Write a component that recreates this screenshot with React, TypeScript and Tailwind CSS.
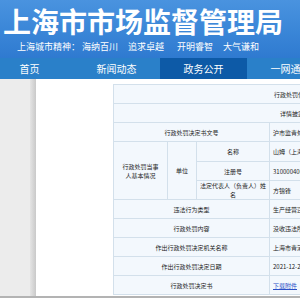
import React from 'react'

const nav = ['首页', '新闻动态', '政务公开', '一网通办']

const cell = "border border-[#d3e0eb] bg-[#f3f8fd] text-[6px] leading-[9px] text-[#222] text-center"
const val = "border border-[#d3e0eb] bg-[#f3f8fd] text-[6px] leading-[9px] text-[#222] text-left px-[3px] whitespace-nowrap"

const rows: [string, string][] = [
  ['违法行为类型', '生产经营违反食品安全标准的食品'],
  ['行政处罚内容', '没收违法所得，罚款'],
  ['作出行政处罚决定机关名称', '上海市青浦区市场监督管理局'],
  ['作出行政处罚决定日期', '2021-12-28'],
]

export default function App() {
  return (
    <div className="w-[300px] h-[300px] overflow-hidden bg-white" style={{ fontFamily: '"Noto Sans CJK SC", "Noto Sans", sans-serif' }}>
      <div className="h-[58px] bg-gradient-to-b from-[#4a93df] via-[#3b87d8] to-[#2f7ad0] pl-[3px] pt-[6px]">
        <div className="text-[28px] leading-[30px] font-bold text-white whitespace-nowrap">上海市市场监督管理局</div>
        <div className="mt-[6px] ml-[14px] text-[9px] leading-[10px] text-white whitespace-nowrap flex">
          <span>上海城市精神：</span>
          <span className="ml-[2px]">海纳百川</span>
          <span className="ml-[10px]">追求卓越</span>
          <span className="ml-[13px]">开明睿智</span>
          <span className="ml-[10px]">大气谦和</span>
        </div>
      </div>

      <div className="flex h-[21px] bg-[#2a80c9] -ml-[14px]">
        {nav.map((n, i) => (
          <div key={n} className={`w-[87px] shrink-0 text-center text-[10px] leading-[22px] text-white ${i === 2 ? 'bg-[#0d5aa7]' : ''}`}>{n}</div>
        ))}
      </div>

      <div className="flex h-[219px] border-b-2 border-[#b3b3b3]">
        <div className="w-[30px] bg-[#ececec]" />
        <div className="w-[6px] bg-gradient-to-r from-[#e4e4e4] to-[#c9c9c9]" />
        <div className="flex-1 bg-white pt-[5px] pl-[77px] overflow-hidden">
          <table className="table-fixed border-collapse w-[370px] border border-[#d3e0eb]">
            <colgroup>
              <col className="w-[54px]" />
              <col className="w-[29px]" />
              <col className="w-[73px]" />
              <col />
            </colgroup>
            <tbody>
              <tr className="h-[19px]"><td colSpan={4} className={cell}>行政处罚信息公示</td></tr>
              <tr className="h-[19px]"><td colSpan={4} className={cell}>详情披露信息</td></tr>
              <tr className="h-[19px]">
                <td colSpan={3} className={cell}>行政处罚决定书文号</td>
                <td className={val}>沪市监青处〔2021〕292021001234号</td>
              </tr>
              <tr className="h-[20px]">
                <td rowSpan={3} className={`${cell} px-[6px]`}>行政处罚当事人基本情况</td>
                <td rowSpan={3} className={cell}>单位</td>
                <td className={cell}>名称</td>
                <td className={val}>山姆（上海）商贸有限公司</td>
              </tr>
              <tr className="h-[19px]">
                <td className={cell}>注册号</td>
                <td className={val}>310000400123456</td>
              </tr>
              <tr className="h-[18px]">
                <td className={`${cell} px-[3px]`}>法定代表人（负责人）姓名</td>
                <td className={val}>方锦锋</td>
              </tr>
              {rows.map(([k, v]) => (
                <tr key={k} className="h-[19px]">
                  <td colSpan={3} className={cell}>{k}</td>
                  <td className={val}>{v}</td>
                </tr>
              ))}
              <tr className="h-[19px]">
                <td colSpan={3} className={cell}>行政处罚决定书</td>
                <td className={val}><a href="#" className="text-[#2a4fc7] underline">下载附件</a></td>
              </tr>
            </tbody>
          </table>
        </div>
      </div>
    </div>
  )
}
